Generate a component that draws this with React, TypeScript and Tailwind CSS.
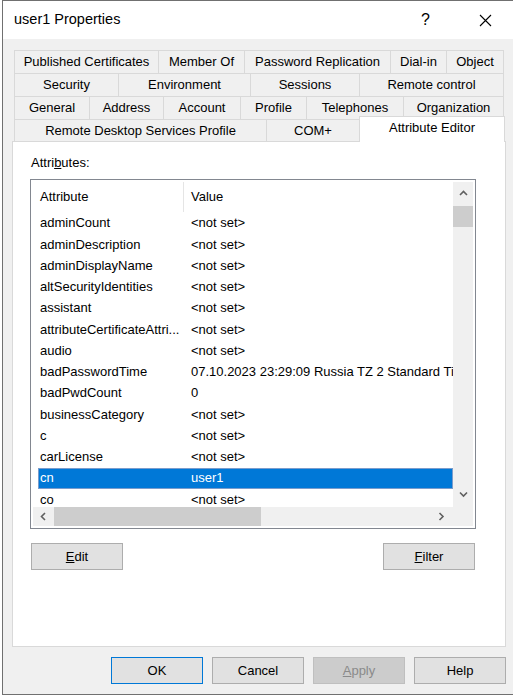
import React from "react";

const tabRows: [string, number][][] = [
  [
    ["Published Certificates", 144],
    ["Member Of", 86],
    ["Password Replication", 146],
    ["Dial-in", 56],
    ["Object", 58],
  ],
  [
    ["Security", 104],
    ["Environment", 132],
    ["Sessions", 109],
    ["Remote control", 145],
  ],
  [
    ["General", 75],
    ["Address", 74],
    ["Account", 77],
    ["Profile", 66],
    ["Telephones", 97],
    ["Organization", 101],
  ],
];

const attrs: [string, string][] = [
  ["adminCount", "<not set>"],
  ["adminDescription", "<not set>"],
  ["adminDisplayName", "<not set>"],
  ["altSecurityIdentities", "<not set>"],
  ["assistant", "<not set>"],
  ["attributeCertificateAttri...", "<not set>"],
  ["audio", "<not set>"],
  ["badPasswordTime", "07.10.2023 23:29:09 Russia TZ 2 Standard Time"],
  ["badPwdCount", "0"],
  ["businessCategory", "<not set>"],
  ["c", "<not set>"],
  ["carLicense", "<not set>"],
  ["cn", "user1"],
  ["co", "<not set>"],
];

function Chevron({ dir }: { dir: "up" | "down" | "left" | "right" }) {
  const d = {
    up: "M1 5 L4.5 1.5 L8 5",
    down: "M1 1.5 L4.5 5 L8 1.5",
    left: "M5 1 L1.5 4.5 L5 8",
    right: "M1.5 1 L5 4.5 L1.5 8",
  }[dir];
  const vertical = dir === "up" || dir === "down";
  return (
    <svg
      width={vertical ? 9 : 7}
      height={vertical ? 7 : 9}
      viewBox={vertical ? "0 0 9 7" : "0 0 7 9"}
    >
      <path d={d} fill="none" stroke="#606060" strokeWidth="1.6" />
    </svg>
  );
}

function Button({
  children,
  focused,
  disabled,
}: {
  children: React.ReactNode;
  focused?: boolean;
  disabled?: boolean;
}) {
  return (
    <button
      className={
        "w-[92px] h-[27px] text-[13px] border " +
        (disabled
          ? "bg-[#cccccc] border-[#bfbfbf] text-[#8a8a8a]"
          : focused
          ? "bg-[#e1e1e1] border-[#0078d7] text-black"
          : "bg-[#e1e1e1] border-[#adadad] text-black")
      }
    >
      {children}
    </button>
  );
}

export default function App() {
  return (
    <div
      className="w-[513px] h-[695px] bg-white pl-[2px]"
      style={{ fontFamily: '"Liberation Sans", Arial, sans-serif' }}
    >
      <div className="h-full flex flex-col border-l border-t border-b border-[#707070] bg-[#f0f0f0]">
        {/* title bar */}
        <div className="h-[38px] bg-white flex items-center pl-[11px] shrink-0">
          <span className="text-[14.5px] text-black">user1 Properties</span>
          <span className="ml-auto mr-[49px] text-[16px] text-black">?</span>
          <svg width="13" height="13" viewBox="0 0 13 13" className="mr-[21px]">
            <path d="M1 1 L12 12 M12 1 L1 12" stroke="#000" strokeWidth="1.1" />
          </svg>
        </div>

        {/* tabs */}
        <div className="pt-[11px] pl-[9px] text-[13px] text-black">
          <div className="pl-[2px]">
            {tabRows.map((row, i) => (
              <div key={i} className="flex h-[23px]">
                {row.map(([label, w], j) => (
                  <div
                    key={label}
                    style={{ width: w }}
                    className={
                      "flex items-center justify-center border-t border-l border-[#d9d9d9] " +
                      (j === row.length - 1 ? "border-r" : "")
                    }
                  >
                    {label}
                  </div>
                ))}
              </div>
            ))}
            <div className="flex h-[22px] items-start">
              <div className="w-[252px] h-[22px] flex items-center justify-center border-t border-l border-[#d9d9d9]">
                Remote Desktop Services Profile
              </div>
              <div className="w-[93px] h-[22px] flex items-center justify-center border-t border-l border-[#d9d9d9]">
                COM+
              </div>
              <div className="relative z-10 -mt-[3px] w-[146px] h-[26px] pb-[3px] flex items-center justify-center bg-white border-t border-l border-r border-[#d9d9d9]">
                Attribute Editor
              </div>
            </div>
          </div>

          {/* panel */}
          <div className="w-[494px] h-[506px] bg-white border border-[#d9d9d9] pt-[13px] pl-[17px]">
            <div className="ml-[1px] leading-[16px]">
              Attri<u>b</u>utes:
            </div>
            <div className="mt-[8px] w-[446px] h-[350px] border border-[#828790] p-[2px] flex flex-col">
              <div className="flex h-[325px]">
                <div className="w-[420px] overflow-hidden">
                  <div className="flex h-[31px] items-center pb-[1px]">
                    <div className="w-[150px] pl-[7px]">Attribute</div>
                    <div className="w-px h-[30px] self-start bg-[#e5e5e5]" />
                    <div className="pl-[7px]">Value</div>
                  </div>
                  {attrs.map(([k, v]) => {
                    const sel = k === "cn";
                    return (
                      <div
                        key={k}
                        className={
                          "flex items-center h-[21.25px] ml-[5px] pl-[2px] pb-[1px] whitespace-nowrap " +
                          (sel
                            ? "bg-[#0078d7] text-white outline outline-1 -outline-offset-1 outline-[#7a9ccc]"
                            : "")
                        }
                      >
                        <div className="w-[143px] shrink-0 overflow-hidden">{k}</div>
                        <div className="pl-[8px]">{v}</div>
                      </div>
                    );
                  })}
                </div>
                <div className="w-[20px] bg-[#f0f0f0] flex flex-col items-center">
                  <div className="h-[20px] flex items-center justify-center mt-[1px]">
                    <Chevron dir="up" />
                  </div>
                  <div className="mt-[3px] w-[20px] h-[21px] bg-[#cdcdcd]" />
                  <div className="mt-auto h-[20px] mb-[3px] flex items-center justify-center">
                    <Chevron dir="down" />
                  </div>
                </div>
              </div>
              <div className="flex h-[20px] bg-[#f0f0f0]">
                <div className="w-[20px] flex items-center justify-center">
                  <Chevron dir="left" />
                </div>
                <div className="ml-[1px] w-[207px] bg-[#cdcdcd]" />
                <div className="ml-auto w-[20px] flex items-center justify-center mr-[2px]">
                  <Chevron dir="right" />
                </div>
                <div className="w-[20px]" />
              </div>
            </div>
            <div className="mt-[14px] w-[446px] flex justify-between px-[1px]">
              <Button>
                <u>E</u>dit
              </Button>
              <Button>
                <u>F</u>ilter
              </Button>
            </div>
          </div>

          {/* dialog buttons */}
          <div className="mt-[10px] flex gap-[9px] pl-[99px]">
            <Button focused>OK</Button>
            <Button>Cancel</Button>
            <Button disabled>
              <u>A</u>pply
            </Button>
            <Button>Help</Button>
          </div>
        </div>
      </div>
    </div>
  );
}
